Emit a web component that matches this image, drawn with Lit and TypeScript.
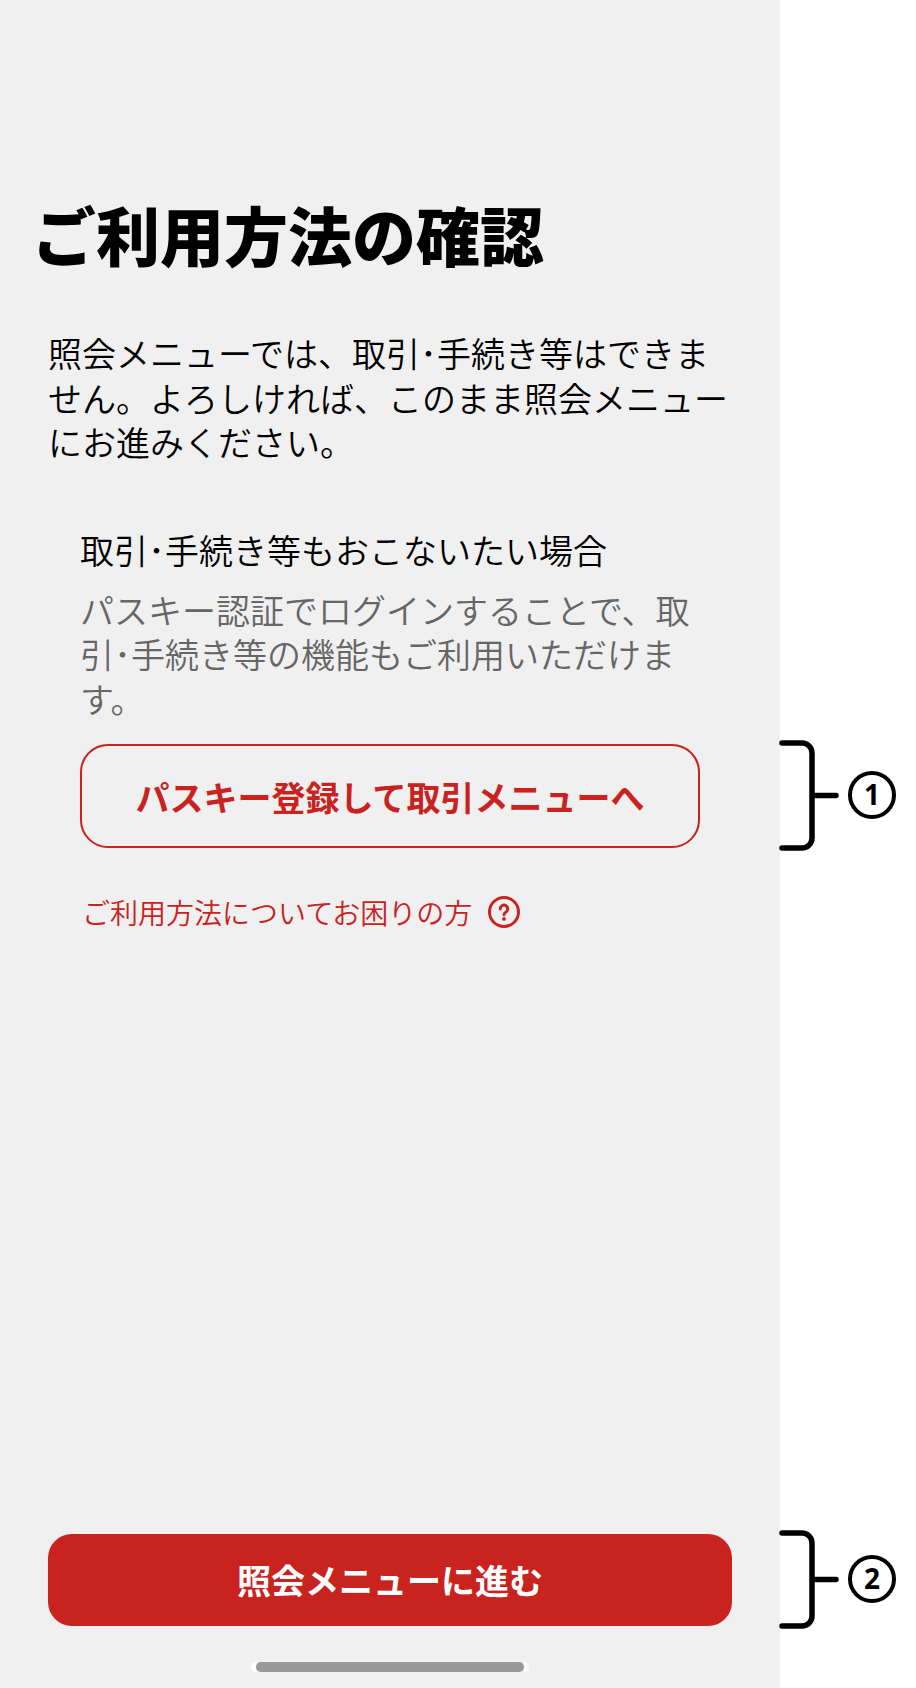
import { LitElement, html, svg, css } from "lit";
import { customElement } from "lit/decorators.js";

@customElement("app-root")
export class AppRoot extends LitElement {
  static styles = css`
    :host {
      display: grid;
      grid-template-columns: 780px 136px;
      width: 916px;
      height: 1688px;
      background: #fff;
      font-family: "Noto Sans CJK JP", "Noto Sans", sans-serif;
      font-size: 34px;
      font-weight: 350;
      color: #000;
      overflow: hidden;
    }
    .panel {
      background: #f0f0f0;
      display: flex;
      flex-direction: column;
      height: 1688px;
      box-sizing: border-box;
      padding: 193px 48px 16px 48px;
    }
    h1 {
      margin: 0 0 0 -16px;
      font-size: 64px;
      line-height: 80px;
      font-weight: 900;
      letter-spacing: 0;
    }
    .lead {
      margin: 58px 0 0;
      line-height: 44.5px;
    }
    .section {
      margin: 63px 32px 0;
      display: flex;
      flex-direction: column;
    }
    .section h2 {
      margin: 0;
      font-size: 34px;
      font-weight: 350;
      line-height: 44px;
    }
    .section p {
      margin: 16px 0 0;
      color: #666;
      line-height: 44.5px;
    }
    .outline {
      margin-top: 23px;
      height: 104px;
      box-sizing: border-box;
      border: 2px solid #c8231f;
      border-radius: 28px;
      color: #c8231f;
      font-weight: 700;
      display: flex;
      align-items: center;
      justify-content: center;
    }
    .help {
      margin-top: 46px;
      padding-left: 2px;
      display: flex;
      align-items: center;
      gap: 16px;
      color: #c8231f;
      font-size: 28px;
      line-height: 36px;
    }
    .help svg {
      display: block;
      width: 32px;
      height: 32px;
    }
    .primary {
      margin-top: auto;
      height: 92px;
      box-sizing: border-box;
      padding-bottom: 2px;
      border-radius: 24px;
      background: #c8231f;
      color: #fff;
      font-weight: 700;
      display: flex;
      align-items: center;
      justify-content: center;
    }
    .home {
      margin: 36px auto 0;
      width: 278px;
      height: 10px;
      box-sizing: border-box;
      border: solid #fff;
      border-width: 0 5px;
      border-radius: 5px;
      display: flex;
    }
    .home i {
      flex: 1;
      background: #999;
      border-radius: 5px;
    }
    .notes svg {
      display: block;
      width: 136px;
      height: 1688px;
      overflow: visible;
    }
    .notes path {
      fill: none;
      stroke: #000;
      stroke-width: 5.5;
      stroke-linecap: round;
    }
    .notes circle {
      fill: #fff;
      stroke: #000;
      stroke-width: 4;
    }
    .notes text {
      font-family: "Noto Sans", "Liberation Sans", sans-serif;
      font-size: 28px;
      font-weight: 700;
      text-anchor: middle;
    }
  `;

  private note(top: number, bottom: number, n: string, cy: number) {
    const mid = (top + bottom) / 2;
    return svg`
      <path d="M2 ${top}H22a10 10 0 0 1 10 10V${bottom - 10}a10 10 0 0 1 -10 10H2M32 ${mid}H56"></path>
      <circle cx="92" cy=${cy} r="22"></circle>
      <text x="92" y=${cy + 10}>${n}</text>
    `;
  }

  render() {
    return html`
      <main class="panel">
        <h1>ご利用方法の確認</h1>
        <p class="lead">照会メニューでは、取引･手続き等はできません。よろしければ、このまま照会メニューにお進みください。</p>
        <section class="section">
          <h2>取引･手続き等もおこないたい場合</h2>
          <p>パスキー認証でログインすることで、取引･手続き等の機能もご利用いただけます。</p>
          <div class="outline">パスキー登録して取引メニューへ</div>
          <div class="help">
            <span>ご利用方法についてお困りの方</span>
            <svg viewBox="0 0 32 32" aria-hidden="true">
              <circle cx="16" cy="16" r="14.5" fill="none" stroke="#c8231f" stroke-width="3"></circle>
              <path d="M12.2 13a3.8 3.8 0 1 1 5.9 3.1c-1.4.9-2.1 1.5-2.1 2.7" fill="none" stroke="#c8231f" stroke-width="3" stroke-linecap="round"></path>
              <circle cx="16" cy="22.9" r="1.9" fill="#c8231f"></circle>
            </svg>
          </div>
        </section>
        <div class="primary">照会メニューに進む</div>
        <div class="home"><i></i></div>
      </main>
      <aside class="notes">
        <svg viewBox="0 0 136 1688" aria-hidden="true">
          ${this.note(743, 848, "1", 795)}
          ${this.note(1533, 1626, "2", 1579)}
        </svg>
      </aside>
    `;
  }
}
